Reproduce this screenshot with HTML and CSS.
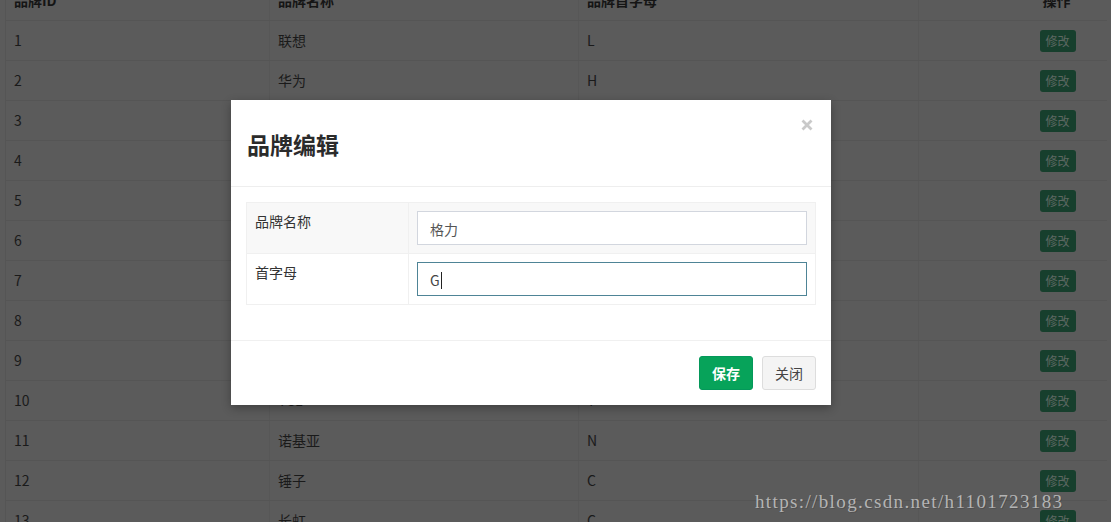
FILE: index.html
```html
<!DOCTYPE html>
<html lang="zh">
<head>
<meta charset="utf-8">
<title>品牌管理</title>
<link rel="stylesheet" href="styles.css">
</head>
<body>
<table class="grid">
  <colgroup>
    <col class="c1"><col class="c2"><col class="c3"><col class="c4">
  </colgroup>
  <thead>
    <tr><th>品牌ID</th><th>品牌名称</th><th>品牌首字母</th><th class="op">操作</th></tr>
  </thead>
  <tbody>
    <tr><td>1</td><td>联想</td><td>L</td><td class="op"><span class="btn-xs">修改</span></td></tr>
    <tr><td>2</td><td>华为</td><td>H</td><td class="op"><span class="btn-xs">修改</span></td></tr>
    <tr><td>3</td><td>三星</td><td>S</td><td class="op"><span class="btn-xs">修改</span></td></tr>
    <tr><td>4</td><td>小米</td><td>X</td><td class="op"><span class="btn-xs">修改</span></td></tr>
    <tr><td>5</td><td>OPPO</td><td>O</td><td class="op"><span class="btn-xs">修改</span></td></tr>
    <tr><td>6</td><td>360</td><td>S</td><td class="op"><span class="btn-xs">修改</span></td></tr>
    <tr><td>7</td><td>中兴</td><td>Z</td><td class="op"><span class="btn-xs">修改</span></td></tr>
    <tr><td>8</td><td>魅族</td><td>M</td><td class="op"><span class="btn-xs">修改</span></td></tr>
    <tr><td>9</td><td>金立</td><td>J</td><td class="op"><span class="btn-xs">修改</span></td></tr>
    <tr><td>10</td><td>TCL</td><td>T</td><td class="op"><span class="btn-xs">修改</span></td></tr>
    <tr><td>11</td><td>诺基亚</td><td>N</td><td class="op"><span class="btn-xs">修改</span></td></tr>
    <tr><td>12</td><td>锤子</td><td>C</td><td class="op"><span class="btn-xs">修改</span></td></tr>
    <tr><td>13</td><td>长虹</td><td>C</td><td class="op"><span class="btn-xs">修改</span></td></tr>
  </tbody>
</table>

<div class="modal">
  <div class="modal-header">
    <svg class="close" width="12" height="12" viewBox="0 0 12 12" aria-label="关闭">
      <path d="M1.5 1.5 L10.5 10.5 M10.5 1.5 L1.5 10.5" stroke="#c9c9c9" stroke-width="2.8" stroke-linecap="butt" fill="none"/>
    </svg>
    <h3 class="modal-title">品牌编辑</h3>
  </div>
  <div class="modal-body">
    <table class="form-table">
      <tr class="striped">
        <td class="label">品牌名称</td>
        <td class="field"><div class="input">格力</div></td>
      </tr>
      <tr>
        <td class="label">首字母</td>
        <td class="field"><div class="input focus">G<span class="caret"></span></div></td>
      </tr>
    </table>
  </div>
  <div class="modal-footer">
    <span class="btn btn-success">保存</span>
    <span class="btn btn-default">关闭</span>
  </div>
</div>

<div class="watermark">https://blog.csdn.net/h1101723183</div>
</body>
</html>
```

FILE: styles.css
```css
html, body {
  margin: 0;
  padding: 0;
  height: 100%;
  overflow: hidden;
  background: #5b5b5b;
  font-family: "Noto Sans CJK SC", "Noto Sans", sans-serif;
  font-size: 14px;
  color: #1a1a1a;
}

.grid {
  margin: -20px 0 0 5px;
  width: 1101px;
  border-collapse: collapse;
  table-layout: fixed;
  border-left: 1px solid #555555;
}
.c1 { width: 264px; }
.c2 { width: 309px; }
.c3 { width: 340px; }
.c4 { width: 188px; }

.grid th,
.grid td {
  height: 40px;
  box-sizing: border-box;
  padding: 0 8px;
  line-height: 20px;
  text-align: left;
  vertical-align: middle;
  border-right: 1px solid #575757;
  border-bottom: 1px solid #555555;
}
.grid th {
  font-weight: bold;
  color: #151515;
}
.grid th.op { text-align: right; padding-right: 36px; border-right: none; }
.grid td.op { text-align: right; padding-right: 31px; border-right: none; }

.btn-xs {
  display: inline-block;
  width: 36px;
  height: 22px;
  box-sizing: border-box;
  text-align: center;
  font-size: 12px;
  line-height: 22px;
  border-radius: 3px;
  background: #173f2d;
  color: #5d6862;
  vertical-align: middle;
}

/* modal */
.modal {
  position: absolute;
  left: 231px;
  top: 100px;
  width: 600px;
  background: #ffffff;
  box-shadow: 0 3px 9px rgba(0, 0, 0, 0.3);
  color: #333333;
}
.modal-header {
  position: relative;
  height: 87px;
  box-sizing: border-box;
  padding: 30px 16px 0;
  border-bottom: 1px solid #eeeeee;
}
.modal-title {
  margin: 0;
  font-size: 23px;
  line-height: 28px;
  font-weight: bold;
  color: #2b2b2b;
}
.close {
  position: absolute;
  right: 18px;
  top: 19px;
  display: block;
}

.modal-body {
  padding: 15px 15px 0;
}
.form-table {
  width: 100%;
  border-collapse: collapse;
  margin-bottom: 35px;
}
.form-table td {
  border: 1px solid #f0f0f0;
  padding: 8px;
  vertical-align: top;
  line-height: 20px;
}
.form-table .label {
  width: 145px;
  color: #333333;
}
.form-table .field {
  padding-left: 8px;
  padding-right: 8px;
}
.striped td { background: #f8f8f8; }

.input {
  height: 34px;
  box-sizing: border-box;
  border: 1px solid #d2d6de;
  background: #ffffff;
  padding: 7px 12px;
  line-height: 20px;
  color: #555555;
}
.input.focus {
  border-color: #4e8496;
  color: #444444;
}
.caret {
  display: inline-block;
  width: 1px;
  height: 17px;
  background: #222222;
  vertical-align: -3px;
  margin-left: 1px;
}

.modal-footer {
  border-top: 1px solid #f0f0f0;
  padding: 15px;
  display: flex;
  justify-content: flex-end;
  gap: 9px;
}
.btn {
  display: inline-block;
  box-sizing: border-box;
  height: 34px;
  padding: 6px 12px;
  line-height: 20px;
  font-size: 14px;
  border-radius: 3px;
  border: 1px solid transparent;
}
.btn-success {
  background: #07a35a;
  border-color: #04985a;
  color: #ffffff;
  font-weight: bold;
}
.btn-default {
  background: #f4f4f4;
  border-color: #dddddd;
  color: #444444;
}

.watermark {
  position: absolute;
  left: 755px;
  top: 489px;
  font-family: "Liberation Serif", "DejaVu Serif", serif;
  font-size: 19px;
  letter-spacing: 1.37px;
  line-height: 26px;
  color: #b4b4b4;
  text-shadow: 1px 1px 0 rgba(0, 0, 0, 0.15);
  white-space: nowrap;
}
```
